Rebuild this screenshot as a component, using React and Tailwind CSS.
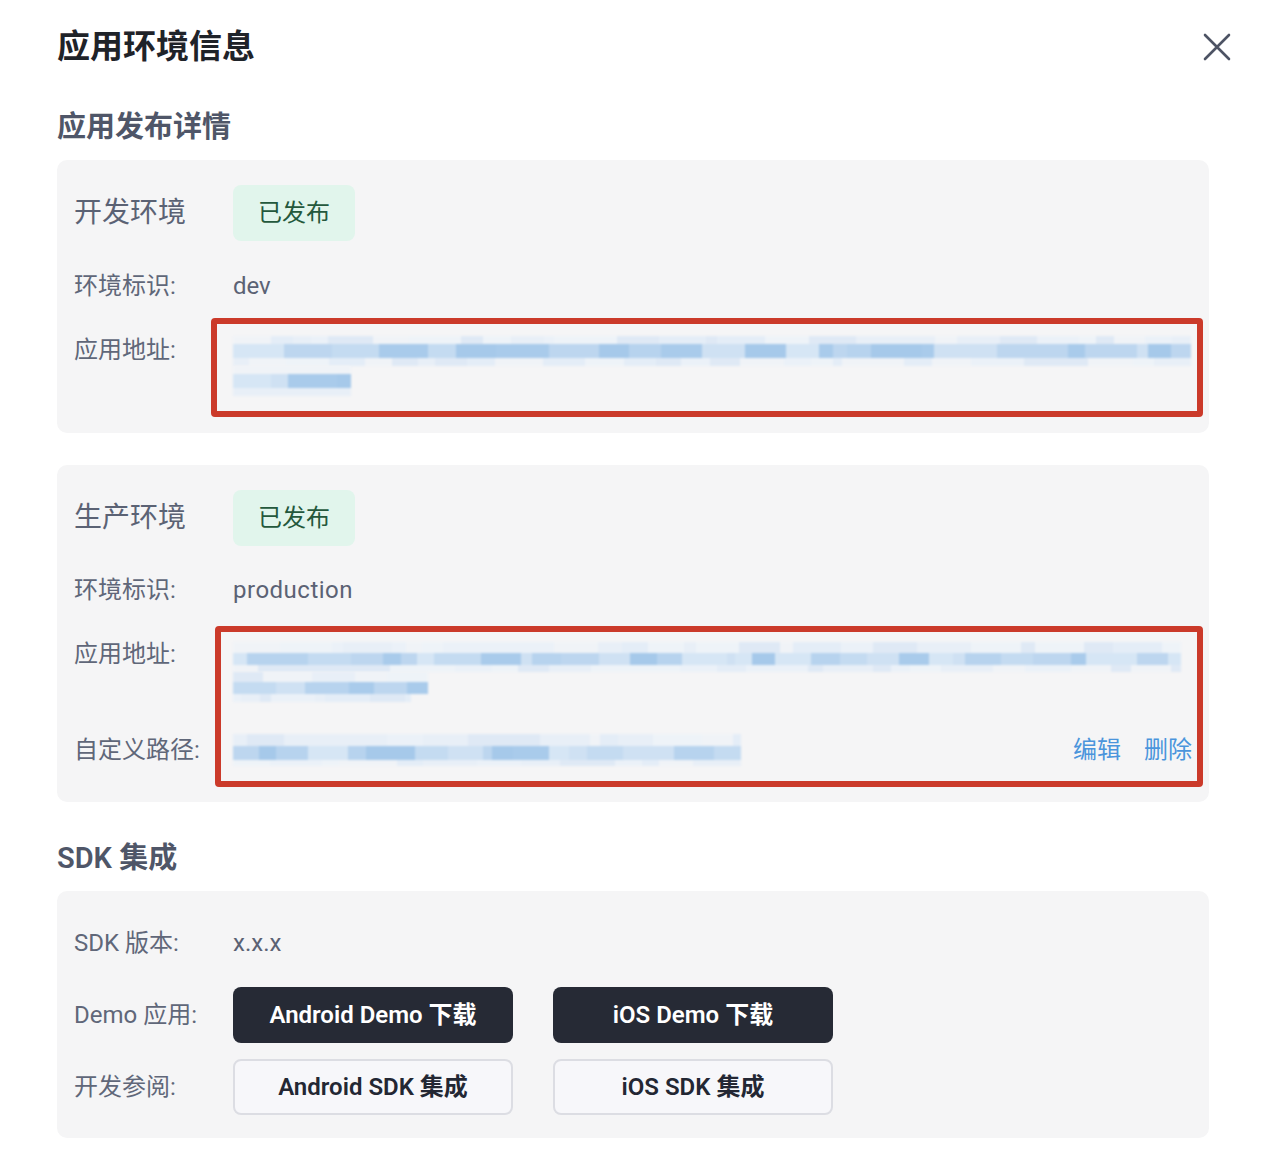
import React from "react";

const FONT = { fontFamily: 'Roboto, "Noto Sans CJK SC", "Noto Sans", sans-serif' };

function makeRng(seed) {
  let s = seed;
  return () => {
    s = (s * 9301 + 49297) % 233280;
    return s / 233280;
  };
}

const STRONG = ["#b7d3ee", "#c4dbf1", "#a9cbeb", "#cfe1f3", "#bdd6ef", "#d6e6f5", "#a6c9ea"];
const FAINT = ["#e4edf7", "#ebf1f8", "#dfe9f5", "#eef3f8", "#e8eff7", "#f0f3f7"];

function Band({ width, seed, height, palette }) {
  const r = makeRng(seed);
  const segs = [];
  let total = 0;
  while (total < width) {
    let w = Math.round(8 + r() * 46);
    if (total + w > width) w = width - total;
    segs.push({ w, c: palette[Math.floor(r() * palette.length)] });
    total += w;
  }
  return (
    <div className="flex" style={{ width, height }}>
      {segs.map((s, i) => (
        <div key={i} style={{ width: s.w, height, backgroundColor: s.c }} />
      ))}
    </div>
  );
}

function BlurLine({ width, seed, top = 8, mid = 14, bottom = 8, topW, bottomW }) {
  return (
    <div className="flex flex-col blur-[0.8px]">
      <Band width={topW ?? width} seed={seed} height={top} palette={FAINT} />
      <Band width={width} seed={seed + 7} height={mid} palette={STRONG} />
      <Band width={bottomW ?? width} seed={seed + 13} height={bottom} palette={FAINT} />
    </div>
  );
}

function Badge() {
  return (
    <div className="w-[122px] h-[56px] rounded-[8px] bg-[#e1f5ec] flex items-center justify-center text-[24px] text-[#24583c]">
      已发布
    </div>
  );
}

function Label({ children }) {
  return (
    <div className="w-[159px] shrink-0 text-[24px] leading-[32px] text-[#606779] whitespace-nowrap">
      {children}
    </div>
  );
}

function EnvHeader({ title }) {
  return (
    <div className="flex items-center h-[56px]">
      <div className="w-[159px] shrink-0 text-[28px] text-[#5b6274]">{title}</div>
      <Badge />
    </div>
  );
}

export default function App() {
  return (
    <div className="min-h-[1170px] bg-white pl-[57px] pr-[59px] pt-[25px]" style={FONT}>
      {/* Header */}
      <div className="flex items-center justify-between h-[44px]">
        <div className="text-[33px] font-bold text-[#1f2329] leading-[44px]">应用环境信息</div>
        <svg className="-mr-[22px]" width="28" height="28" viewBox="0 0 28 28" fill="none">
          <path d="M2 2 L26 26 M26 2 L2 26" stroke="#4d5364" strokeWidth="2.6" strokeLinecap="round" />
        </svg>
      </div>

      <div className="mt-[38px] text-[29px] font-semibold text-[#4f5668] leading-[40px]">应用发布详情</div>

      {/* Dev card */}
      <div className="mt-[13px] rounded-[10px] bg-[#f5f5f6] pl-[17px] pr-[17px] pt-[25px] pb-[37px]">
        <EnvHeader title="开发环境" />
        <div className="mt-[29px] flex">
          <Label>环境标识:</Label>
          <div className="text-[24px] leading-[32px] text-[#5b6274]">dev</div>
        </div>
        <div className="relative mt-[32px]">
          <div className="flex">
            <Label>应用地址:</Label>
            <div className="flex flex-col pt-[2px]">
              <BlurLine width={958} seed={11} />
              <BlurLine width={118} seed={29} />
            </div>
          </div>
          <div className="absolute left-[137px] top-[-16px] right-[-11px] bottom-[-21px] border-[6px] border-[#cb3a2a] rounded-[4px] pointer-events-none" />
        </div>
      </div>

      {/* Prod card */}
      <div className="mt-[32px] rounded-[10px] bg-[#f5f5f6] pl-[17px] pr-[17px] pt-[25px] pb-[36px]">
        <EnvHeader title="生产环境" />
        <div className="mt-[28px] flex">
          <Label>环境标识:</Label>
          <div className="text-[24px] leading-[32px] text-[#5b6274] tracking-[0.5px]">production</div>
        </div>
        <div className="relative mt-[32px]">
          <div className="flex">
            <Label>应用地址:</Label>
            <div className="flex flex-col pt-[4px]">
              <BlurLine width={948} seed={41} top={11} mid={12} bottom={7} />
              <BlurLine width={195} seed={57} top={10} mid={12} bottom={8} bottomW={178} />
            </div>
          </div>
          <div className="mt-[32px] flex items-center">
            <Label>自定义路径:</Label>
            <div className="flex-1 flex items-center justify-between">
              <BlurLine width={508} seed={73} top={12} mid={14} bottom={6} />
              <div className="flex gap-[23px] text-[24px] leading-[32px] text-[#4b95dc]">
                <span>编辑</span>
                <span>删除</span>
              </div>
            </div>
          </div>
          <div className="absolute left-[141px] top-[-12px] right-[-11px] bottom-[-21px] border-[6px] border-[#cb3a2a] rounded-[4px] pointer-events-none" />
        </div>
      </div>

      <div className="mt-[36px] text-[29px] font-semibold text-[#4f5668] leading-[40px]">SDK 集成</div>

      {/* SDK card */}
      <div className="mt-[13px] rounded-[10px] bg-[#f5f5f6] pl-[17px] pr-[17px] pt-[36px] pb-[23px]">
        <div className="flex">
          <Label>SDK 版本:</Label>
          <div className="text-[24px] leading-[32px] text-[#5b6274]">x.x.x</div>
        </div>
        <div className="mt-[28px] flex items-center">
          <Label>Demo 应用:</Label>
          <div className="flex gap-[40px]">
            <button className="w-[280px] h-[56px] rounded-[8px] bg-[#262a35] text-white text-[24px] font-semibold">
              Android Demo 下载
            </button>
            <button className="w-[280px] h-[56px] rounded-[8px] bg-[#262a35] text-white text-[24px] font-semibold">
              iOS Demo 下载
            </button>
          </div>
        </div>
        <div className="mt-[16px] flex items-center">
          <Label>开发参阅:</Label>
          <div className="flex gap-[40px]">
            <button className="w-[280px] h-[56px] rounded-[8px] bg-[#f7f7fa] border-2 border-[#dcdde3] text-[#232733] text-[24px] font-semibold">
              Android SDK 集成
            </button>
            <button className="w-[280px] h-[56px] rounded-[8px] bg-[#f7f7fa] border-2 border-[#dcdde3] text-[#232733] text-[24px] font-semibold">
              iOS SDK 集成
            </button>
          </div>
        </div>
      </div>
    </div>
  );
}
